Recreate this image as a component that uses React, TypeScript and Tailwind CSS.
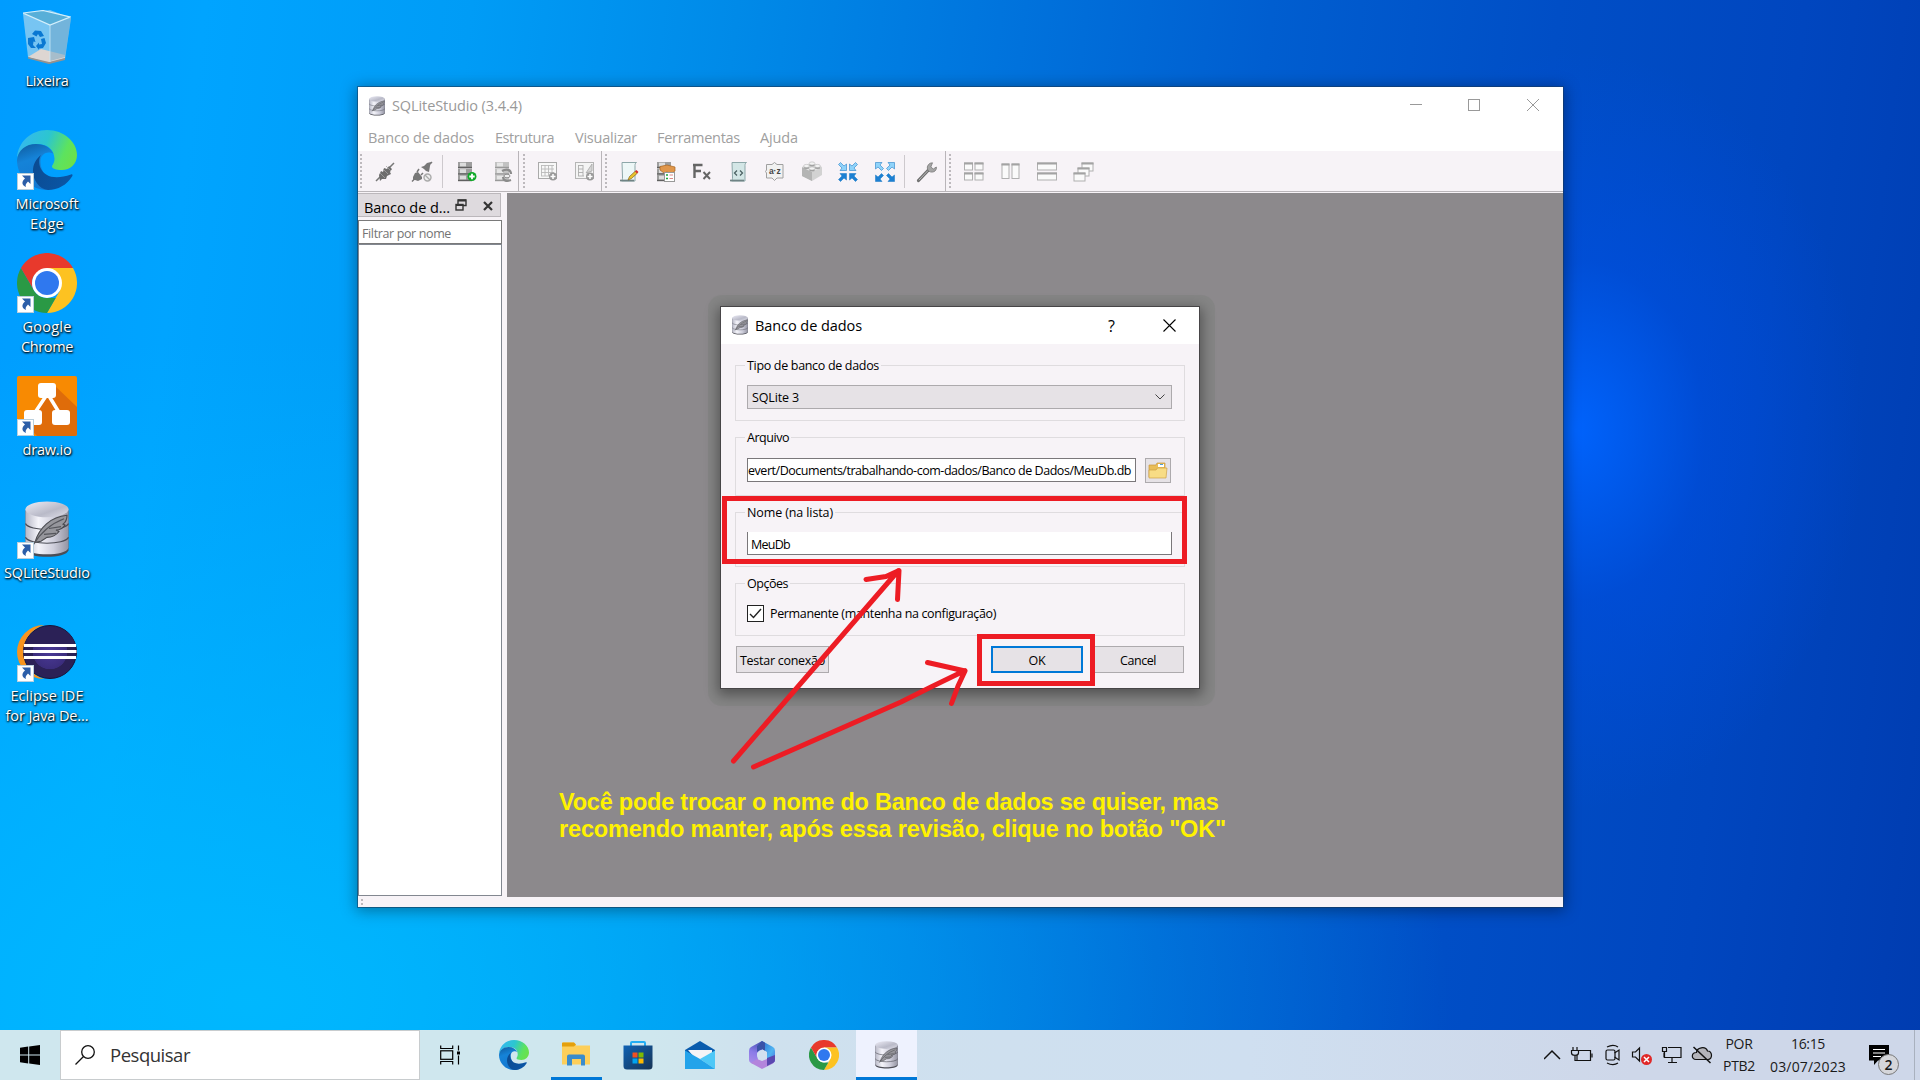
import React, { useLayoutEffect, useRef, useState } from "react";

/* Text run that adjusts its tracking so that it fills a given width. */
function Fit({ w, children, className = "" }: { w: number; children: string; className?: string }) {
  const ref = useRef<HTMLSpanElement>(null);
  const [gap, setGap] = useState(0);
  useLayoutEffect(() => {
    if (ref.current) setGap((w - ref.current.getBoundingClientRect().width) / children.length);
  }, []);
  return (
    <span ref={ref} className={`inline-block shrink-0 whitespace-pre ${className}`} style={{ letterSpacing: `${gap}px` }}>
      {children}
    </span>
  );
}

type S = { className?: string };

const EdgeIcon = ({ className = "" }: S) => (
  <svg viewBox="0 0 60 60" className={className}>
    <defs>
      <linearGradient id="eg1" x1="0" y1="0.3" x2="1" y2="0.6">
        <stop offset="0" stopColor="#35b8f1" />
        <stop offset="0.45" stopColor="#2cc6cf" />
        <stop offset="0.8" stopColor="#5de35e" />
        <stop offset="1" stopColor="#6be04c" />
      </linearGradient>
      <linearGradient id="eg2" x1="0" y1="0" x2="0.3" y2="1">
        <stop offset="0" stopColor="#0f5a9c" />
        <stop offset="0.4" stopColor="#1583d8" />
        <stop offset="1" stopColor="#1478d0" />
      </linearGradient>
      <linearGradient id="eg3" x1="0" y1="0" x2="1" y2="0.4">
        <stop offset="0" stopColor="#0b4a90" />
        <stop offset="1" stopColor="#0a55a4" />
      </linearGradient>
    </defs>
    <path d="M0 28C1 12 14 0 30 0c17 0 30 12 30 25 0 9-7 15-15 15-6 0-10-1.500-10-3.500 0-1.500 2.500-3 2.500-8C37 19 30 14 20 14 11 14 3 19 0 28Z" fill="url(#eg1)" />
    <path d="M0 30C1 20 9 14 19 14c9 0 15 4 17.500 10-4-3-13-2-13 8 0 10 8 19 16 20-3 5-6 8-9.500 8C13 60 0 46 0 30Z" fill="url(#eg2)" />
    <path d="M24 25c-2 3-2.500 8-.5 13 4 9 15 12 30.500 6.500 1.500-.5 2 .5 1.200 1.800C50 55 41 60 31 60 22 59 16 50 16 41c0-7 3-12 8-16Z" fill="url(#eg3)" />
  </svg>
);

const ChromeIcon = ({ className = "" }: S) => (
  <svg viewBox="0 0 60 60" className={className}>
    <path d="M30 30 4 15A30 30 0 0 1 56 15H30Z" fill="#e8392c" />
    <path d="M30 15h26a30 30 0 0 1-26 45L43 37.500Z" fill="#fdc221" />
    <path d="M4 15 17 37.500c3 5 8 7.500 13 7.500h8.700L30 60A30 30 0 0 1 4 15Z" fill="#2a9945" />
    <path d="M4 15h52H30a15 15 0 0 0-13 22.500Z" fill="#e8392c" />
    <circle cx="30" cy="30" r="15" fill="#fff" />
    <circle cx="30" cy="30" r="12" fill="#2f78ef" />
  </svg>
);

const DbIcon = ({ className = "" }: S) => (
  <svg viewBox="0 0 44 58" preserveAspectRatio="none" className={className}>
    <defs>
      <linearGradient id="db1" x1="0" x2="1">
        <stop offset="0" stopColor="#b7b8c6" />
        <stop offset="0.3" stopColor="#f4f4fa" />
        <stop offset="0.65" stopColor="#cfcfdc" />
        <stop offset="1" stopColor="#9394a2" />
      </linearGradient>
      <linearGradient id="db2" x1="0" x2="1" y1="0" y2="1">
        <stop offset="0" stopColor="#ececf6" />
        <stop offset="0.6" stopColor="#b9bac8" />
        <stop offset="1" stopColor="#dedee8" />
      </linearGradient>
    </defs>
    <path d="M.5 10v40c2 9 41 9 43 0V10Z" fill="#4c4d55" />
    <path d="M.5 8v39.500c2 9 41 9 43 0V8Z" fill="url(#db1)" />
    <ellipse cx="22" cy="8.500" rx="21.500" ry="8" fill="url(#db2)" />
    <path d="M.5 23c4 8 39 8 43 0M.5 37c4 8 39 8 43 0" fill="none" stroke="#4d4e57" strokeWidth="1.200" />
    <path d="M10 42C14 27 26 16 42 14.500c0 4-1 7-4 9l2 1c-2 3-6 5-9 5l3 1.500c-3 4-7 6-12 6l-6 4Z" fill="#96969c" stroke="#4a4b50" strokeWidth="1.100" />
    <path d="M8 45C15 33 26 23 39 18M19 34l12-1M24 28l12-2" fill="none" stroke="#55565c" strokeWidth="1.200" />
  </svg>
);

const RecycleBin = ({ className = "" }: S) => (
  <svg viewBox="0 0 48 54" className={className}>
    <path d="M0 4 27 0l21 8-6 41-15 4L5 47Z" fill="#9fd2ee" opacity="0.75" />
    <path d="M5 47l13-8 24 6v3l-16 5Z" fill="#ddd6d2" />
    <path d="M5 47l21 5 16-4v2l-16 4L5 48.500Z" fill="#95928f" />
    <path d="M27 15 48 8l-6 39-15 4Z" fill="#6fa3c4" opacity="0.5" />
    <path d="M0 3 20 .5 47 7 27 15Z" fill="#58afd8" stroke="#d4effb" strokeWidth="1.200" />
    <path d="M27 15v37" stroke="#c9e8f7" strokeWidth="0.800" />
    <g fill="#0a78d2">
      <path d="m9 24 3-3.500 6 .5 3 5-4 1-2-3-1.500 2.500Z" />
      <path d="m5 28 6-1 1.500 5-2-.5-.5 3.500 3 3h-5l-3-4Z" />
      <path d="m18 29 3.500-1 1.500 5-3 5-4 .5v1.500l-3-4 3-3.500v2l3-.5Z" />
    </g>
  </svg>
);

const DrawIo = ({ className = "" }: S) => (
  <svg viewBox="0 0 60 60" className={className}>
    <rect width="60" height="60" rx="2" fill="#f88a02" />
    <path d="M37 9 60 31v27a2 2 0 0 1-2 2H20L10 49l16-27Z" fill="#df6c0a" />
    <path d="M29 20 17 38M32 20l11 18" stroke="#fff" strokeWidth="3.500" />
    <rect x="21" y="7" width="18" height="15" rx="3" fill="#fff" />
    <rect x="7" y="34" width="18" height="15" rx="3" fill="#fff" />
    <rect x="35" y="34" width="18" height="15" rx="3" fill="#fff" />
  </svg>
);

const Eclipse = ({ className = "" }: S) => (
  <svg viewBox="0 0 60 54" className={className}>
    <defs>
      <radialGradient id="ec" cx="0.500" cy="0.500" r="0.500">
        <stop offset="0" stopColor="#4a3a96" />
        <stop offset="0.640" stopColor="#3b2d7c" />
        <stop offset="0.660" stopColor="#2b2156" />
        <stop offset="1" stopColor="#2b2156" />
      </radialGradient>
    </defs>
    <path d="M27 0a27 27 0 0 0 0 54C0 45 0 9 27 0Z" fill="#f7941e" />
    <circle cx="33" cy="27" r="26.500" fill="url(#ec)" stroke="#191338" />
    <path d="M8 19C14-4 52-4 58 19Z" fill="#2b2156" />
    <path d="M7 20.500h52M6.500 26.500h53M7 32.500h52" stroke="#fff" strokeWidth="3" />
  </svg>
);

const Shortcut = () => (
  <svg viewBox="0 0 17 17" className="absolute bottom-0 left-0 size-[17px]">
    <rect x="0.500" y="0.500" width="16" height="16" fill="#fff" stroke="#b9cfdd" />
    <path d="M5 2.500h8.500V11L11 8.500c-2 2-3 3.500-2 5.500-4-1.500-5-5-1-8.500Z" fill="#2c5ea8" />
  </svg>
);

function DesktopItem({ icon, lines, shortcut = true }: { icon: React.ReactNode; lines: [string, number][]; shortcut?: boolean }) {
  return (
    <div className="flex h-[123px] w-[94px] flex-col items-center">
      <div className="relative flex h-[60px] w-[60px] shrink-0 items-center justify-center">
        {icon}
        {shortcut && <Shortcut />}
      </div>
      <div className="mt-1 flex flex-col items-center text-[14.500px] leading-[20px] text-white [text-shadow:1px_1px_2px_#000,0_1px_2px_#000c]">
        {lines.map(([t, w]) => (
          <Fit key={t} w={w}>{t}</Fit>
        ))}
      </div>
    </div>
  );
}

/* ---------- toolbar glyphs, drawn on a 20 x 20 grid ---------- */
const Plug = () => (
  <g>
    <path d="M1 19 6 14M14 6l5-5" stroke="#777" strokeWidth="1.500" />
    <path d="m4 13 2-4 2 1 1-4 3 1 2-3 3 3-2 3 1 2-4 2-1 3-4 0-2 2Z" fill="#6d6d6d" />
    <path d="m5 11 5 5M8 7l5 5M11 4l5 5" stroke="#a4a4a4" strokeWidth="0.800" />
  </g>
);
const Unplug = () => (
  <g>
    <path d="m9 5 3-1 3-3 4-1-1 4-1 6-3-1-2-2Z" fill="#777" />
    <path d="m1 18 0-3 2-4 3-1 4 5 0 2-4 2-3-1Z" fill="#777" />
    <path d="M5 10 7 7M9 13l2-2M0 19.500l3-3M18 2l2-2" stroke="#777" strokeWidth="1.500" />
    <circle cx="15.500" cy="15.500" r="3.500" fill="#eee" stroke="#aaa" strokeWidth="1.400" />
    <path d="m13 13 5 5" stroke="#aaa" strokeWidth="1.300" />
  </g>
);
const Stack = ({ faded = false }: { faded?: boolean }) => (
  <g>
    {[0, 6.500, 13].map((y) => (
      <g key={y}>
        <rect x="1" y={y} width="14" height="6" fill={faded ? "#c2c2c2" : "#9d9d9d"} />
        <rect x="3" y={y + 0.700} width="6" height="3.800" fill={faded ? "#e6e6e6" : "#dcdcdc"} />
        <rect x="1" y={y + 4.800} width="14" height="1.400" fill={faded ? "#999" : "#606060"} />
      </g>
    ))}
  </g>
);
const DbAdd = () => (
  <g>
    <Stack />
    <circle cx="15" cy="14.500" r="4.500" fill="#10a928" />
    <path d="M15 11.800v5.400M12.300 14.500h5.400" stroke="#fff" strokeWidth="1.800" />
  </g>
);
const DbEdit = () => (
  <g>
    <Stack faded />
    <path d="M8 9c5-3 9-1 9 3M17 18c-5 2-8 0-8-3" stroke="#8b8b8b" strokeWidth="2.200" fill="none" />
    <ellipse cx="13" cy="14" rx="3" ry="1.800" fill="#eee" stroke="#909090" />
  </g>
);
const TableAdd = () => (
  <g>
    <rect x="0.500" y="0.500" width="18" height="16" fill="#f8f8f8" stroke="#aaa" />
    <path d="M3 3.500h13M3 7h13M3 10.500h13M3 14h10M3.500 3v11M7 3v11M10.500 3v11M14 3v9" stroke="#b9b9b9" strokeWidth="0.900" />
    <circle cx="15" cy="14.500" r="4" fill="#999" />
    <path d="M15 12v5M12.500 14.500h5" stroke="#fff" strokeWidth="1.500" />
  </g>
);
const ViewAdd = () => (
  <g>
    <rect x="0.500" y="0.500" width="18" height="16" fill="#f4f4f4" stroke="#b5b5b5" />
    <path d="M3 3.500h5M3 7h5M3 10.500h5M3 14h6M3.500 3v11M8 3v11M11 11l6-9v7Z" stroke="#adadad" fill="#d6d6d6" strokeWidth="0.900" />
    <circle cx="15" cy="14.500" r="4" fill="#999" />
    <path d="M15 12v5M12.500 14.500h5" stroke="#fff" strokeWidth="1.500" />
  </g>
);
const Script = ({ pencil = false }: { pencil?: boolean }) => (
  <g>
    <path d="M3 .5h14.500c-1.500 1-1.500 2-1.500 3V19H2.500c1-1 1-2 1-4Z" fill={pencil ? "#edf7f7" : "#d3e6e6"} stroke="#8da7a9" />
    <path d="M1 18.500h14" stroke="#6f8385" strokeWidth="1.700" />
    {pencil ? (
      <>
        <path d="m9 18 1.500-3.500 6-5.500 2 2-6 5.500Z" fill="#e9c22c" stroke="#85641a" strokeWidth="0.700" />
        <path d="m16 9.500 1.500-1.500 2 2-1.500 1.500Z" fill="#d82f2f" />
      </>
    ) : (
      <path d="M8 8.500 5.500 11 8 13.500M11 8.500 13.500 11 11 13.500" fill="none" stroke="#4d6264" strokeWidth="1.300" />
    )}
  </g>
);
const HandDb = () => (
  <g>
    <Stack />
    <path d="M4 4.500 11 3l8 2v4l-4 3-4-2-3 1-4-3Z" fill="#e0964a" stroke="#a8641f" strokeWidth="0.700" />
    <rect x="8.500" y="10.500" width="10" height="9" fill="#fff" stroke="#999" />
    <path d="M10 13h2M10 16.500h2" stroke="#18a838" strokeWidth="1.500" />
    <path d="M13.500 13h3.500M13.500 16.500h3.500" stroke="#d88" />
  </g>
);
const Fx = () => (
  <g fill="none" stroke="#656565">
    <path d="M2.500 16V2M1 3h9.500M2 9h7" strokeWidth="2.400" />
    <path d="m11.500 10 6.500 7M18 10l-6.500 7" strokeWidth="1.900" />
  </g>
);
const Az = () => (
  <g>
    <path d="M1.500 2.500h5.500l2.500-2 2.500 2h6v13.500h-6l-2.500 2.500-2.500-2.500H1.500v-5l-1-1.500 1-1.500Z" fill="#f1f1f1" stroke="#a0a0a0" />
    <text x="9.800" y="12.300" textAnchor="middle" fontSize="8.500" fontWeight="bold" fontFamily="Liberation Sans, sans-serif" fill="#444">a·z</text>
  </g>
);
const Brick = () => (
  <g>
    <path d="m0 5 10-4 10 4v8L10 19 0 14Z" fill="#d2d2d2" />
    <path d="m0 5 10 5v9L0 14Z" fill="#b4b4b4" />
    <path d="m0 5 10-4 10 4-10 5Z" fill="#e2e2e2" />
    {[[10, 1.500], [4.500, 4], [15.500, 4], [10, 6.500]].map(([x, y]) => (
      <g key={`${x}${y}`}>
        <ellipse cx={x} cy={y + 1.500} rx="2.900" ry="1.600" fill="#a0a0a0" />
        <ellipse cx={x} cy={y} rx="2.900" ry="1.600" fill="#f3f3f3" stroke="#aaa" strokeWidth="0.500" />
      </g>
    ))}
  </g>
);
const arrow = "M8.500 8.500V2L6 4 2.500.5l-2 2L4 6 2 8.500Z";
const arrowOut = "M.5.500V7L3 5l3.500 3.500 2-2L5 3 7 .5Z";
const Arrows = ({ d }: { d: string }) => (
  <g stroke="#2680c8" strokeWidth="0.600">
    <path d={d} fill="#8fd3fa" />
    <path d={d} fill="#8fd3fa" transform="matrix(-1 0 0 1 20 0)" />
    <path d={d} fill="#1c80d3" transform="matrix(1 0 0 -1 0 20)" />
    <path d={d} fill="#1c80d3" transform="matrix(-1 0 0 -1 20 20)" />
  </g>
);
const Wrench = () => (
  <g>
    <path d="M1.500 18.500 11 8.500" stroke="#6e6e6e" strokeWidth="3.200" strokeLinecap="round" />
    <path d="M1.800 18.200 11 8.500" stroke="#bbb" strokeWidth="1" />
    <path d="M15.500.8a5 5 0 0 0-5 6.500c1.200 3 5 3.600 7.500 1.700 1.200-1.200 1.600-2.700 1.300-4l-3 2-2.500-2Z" fill="#a5a5a5" stroke="#777" strokeWidth="0.800" />
  </g>
);
function Win({ x, y, w, h }: { x: number; y: number; w: number; h: number }) {
  return (
    <g>
      <rect x={x + 0.500} y={y + 0.500} width={w - 1} height={h - 1} fill="#fafafa" stroke="#b0b0b0" />
      <path d={`M${x} ${y + 1}h${w}`} stroke="#a3a3a3" strokeWidth="2" />
    </g>
  );
}

const Tool = ({ children }: { children: React.ReactNode }) => (
  <div className="flex h-full w-[36.500px] shrink-0 items-center justify-center pt-px">
    <svg viewBox="0 0 20 20" className="size-5 overflow-visible">{children}</svg>
  </div>
);
const Handle = () => <div className="h-[34px] w-0 shrink-0 border-l-2 border-dotted border-[#bdb9bd]" />;
const Sep = () => <div className="h-[33px] w-px shrink-0 bg-[#cdc9cd]" />;

function Toolbar() {
  return (
    <div className="flex h-[41px] items-center border-b border-[#b9b5b9] bg-[#f7f3f7]">
      <div className="flex h-full w-[161px] shrink-0 items-center border-r border-[#b9b5b9] pl-[2px]">
        <Handle />
        <div className="w-[5px] shrink-0" />
        <Tool><Plug /></Tool>
        <Tool><Unplug /></Tool>
        <div className="w-[2px] shrink-0" />
        <Sep />
        <div className="w-[6px] shrink-0" />
        <Tool><DbAdd /></Tool>
        <Tool><DbEdit /></Tool>
      </div>
      <div className="flex h-full w-[83px] shrink-0 items-center border-r border-[#b9b5b9] pl-[4px]">
        <Handle />
        <div className="w-[5px] shrink-0" />
        <Tool><TableAdd /></Tool>
        <Tool><ViewAdd /></Tool>
      </div>
      <div className="flex h-full w-[344px] shrink-0 items-center border-r border-[#b9b5b9] pl-[3px]">
        <Handle />
        <div className="flex h-full shrink-0 items-center pl-[4px]">
          <Tool><Script pencil /></Tool>
          <Tool><HandDb /></Tool>
          <Tool><Fx /></Tool>
          <Tool><Script /></Tool>
          <Tool><Az /></Tool>
          <Tool><Brick /></Tool>
          <Tool><Arrows d={arrow} /></Tool>
          <Tool><Arrows d={arrowOut} /></Tool>
        </div>
        <div className="w-px shrink-0" />
        <Sep />
        <div className="w-[4px] shrink-0" />
        <Tool><Wrench /></Tool>
      </div>
      <div className="flex h-full items-center pl-[3px]">
        <Handle />
        <div className="w-[5px]" />
        <Tool>
          <Win x={0} y={0.500} w={9} h={8} /><Win x={10.500} y={0.500} w={9} h={8} />
          <Win x={0} y={10.500} w={9} h={8} /><Win x={10.500} y={10.500} w={9} h={8} />
        </Tool>
        <Tool><Win x={0.500} y={1.500} w={8} h={15.500} /><Win x={10.500} y={1.500} w={8} h={15.500} /></Tool>
        <Tool><Win x={0} y={0.500} w={20} h={8} /><Win x={0} y={10.500} w={20} h={8} /></Tool>
        <Tool><Win x={7.500} y={0.500} w={12} h={9} /><Win x={3.500} y={5.500} w={12} h={9} /><Win x={-0.500} y={10.500} w={12} h={9} /></Tool>
      </div>
    </div>
  );
}

function MainWindow() {
  const menus: [string, number, string][] = [
    ["Banco de dados", 106, "mr-[21px]"],
    ["Estrutura", 59, "mr-[21px]"],
    ["Visualizar", 62, "mr-[20px]"],
    ["Ferramentas", 83, "mr-[20px]"],
    ["Ajuda", 38, ""],
  ];
  return (
    <section className="absolute left-[358px] top-[87px] flex h-[820px] w-[1205px] flex-col bg-[#f7f3f7] shadow-[0_2px_14px_2px_rgba(0,0,0,0.35),0_0_0_1px_rgba(30,70,110,0.55)]">
      <header className="flex h-[38px] shrink-0 items-center bg-white pl-[11px] text-[14.500px] text-[#999]">
        <DbIcon className="mb-px h-[20px] w-[16px]" />
        <Fit w={130} className="ml-[7px]">SQLiteStudio (3.4.4)</Fit>
        <svg viewBox="0 0 130 12" className="mb-[2px] ml-auto mr-[24px] h-3 w-[130px]" fill="none" stroke="#999">
          <path d="M1 5.500h12" />
          <rect x="59.500" y="0.500" width="11" height="11" />
          <path d="m118 0 12 12M130 0l-12 12" />
        </svg>
      </header>
      <nav className="flex h-[26px] shrink-0 items-center bg-white pl-[10px] text-[14.500px] text-[#a0a0a0]">
        {menus.map(([t, w, m]) => (
          <Fit key={t} w={w} className={m}>{t}</Fit>
        ))}
      </nav>
      <Toolbar />
      <div className="flex h-[705px] w-full shrink-0 pt-px">
        <aside className="flex w-[144px] flex-col">
          <div className="flex h-6 w-[143px] items-center border border-l-0 border-[#bbb7bb] bg-[#dedade] pl-[6px] pt-[5px] text-[14.500px] text-black">
            <Fit w={86}>Banco de d...</Fit>
            <svg viewBox="0 0 12 12" className="mb-[6px] ml-[5px] size-3" fill="none" stroke="#333">
              <path d="M3 5V1h8v5.500H8" strokeWidth="1.400" />
              <path d="M3 1.500h8M1 6h7" strokeWidth="2" />
              <rect x="1" y="5.500" width="7" height="5.500" strokeWidth="1.400" />
            </svg>
            <svg viewBox="0 0 10 10" className="mb-1 ml-4 size-[10px]" stroke="#333" strokeWidth="2.200">
              <path d="m1 1 8 8M9 1 1 9" />
            </svg>
          </div>
          <div className="mt-[3px] flex h-6 items-center border border-[#7a7a7a] bg-white pl-[3px] pt-[4px] text-[12.500px] text-[#747474]">
            <Fit w={89}>Filtrar por nome</Fit>
          </div>
          <div className="h-[652px] border border-[#828790] bg-white" />
        </aside>
        <main className="ml-[5px] flex-1 bg-[#8c898c]" />
      </div>
      <footer className="flex h-[10px] items-center pl-[3px]">
        <div className="h-[6px] border-l-2 border-dotted border-[#bdb9bd]" />
      </footer>
    </section>
  );
}

function Group({ title, w, className, children }: { title: string; w: number; className: string; children: React.ReactNode }) {
  return (
    <div className={`relative flex w-[450px] border border-[#dfdcdf] ${className}`}>
      <div className="absolute -top-[10px] left-[9px] flex h-5 items-center bg-[#f7f3f7] px-[2px]">
        <Fit w={w}>{title}</Fit>
      </div>
      {children}
    </div>
  );
}

function Dialog() {
  return (
    <>
      <div className="absolute left-[708px] top-[295px] h-[411px] w-[507px] rounded-[14px] bg-[#767d76]/30" />
      <section className="absolute left-[720px] top-[306px] flex h-[383px] w-[480px] flex-col border border-[#474547] bg-[#f7f3f7] text-[12.500px] leading-[18px] text-black shadow-[0_4px_12px_2px_rgba(0,0,0,0.38)]">
        <header className="flex h-[37px] shrink-0 items-center bg-white pl-[11px] text-[14.500px]">
          <DbIcon className="mb-[2px] h-[20px] w-[16px]" />
          <Fit w={107} className="ml-[7px]">Banco de dados</Fit>
          <span className="ml-auto w-[9px] text-center text-[16px]">?</span>
          <svg viewBox="0 0 13 13" className="mb-px ml-[47px] mr-[23px] size-[13px]" stroke="#000" strokeWidth="1.100">
            <path d="m.5.500 12 12M12.500.500l-12 12" />
          </svg>
        </header>
        <div className="flex flex-col pl-[14px] pt-[21px]">
          <Group title="Tipo de banco de dados" w={132} className="h-[56px] pl-[11px] pt-[19px]">
            <div className="flex h-6 w-[425px] items-center border border-[#adaaad] bg-[#e6e2e6] pl-1">
              <Fit w={47} className="mt-px">SQLite 3</Fit>
              <svg viewBox="0 0 10 6" className="ml-auto mr-[6px] h-[6px] w-[10px]" fill="none" stroke="#444">
                <path d="m.5.500 4.500 4.500L9.500.5" />
              </svg>
            </div>
          </Group>
          <Group title="Arquivo" w={42} className="mt-4 h-[59px] pl-[11px] pt-5">
            <div className="flex h-6 w-[389px] items-center justify-end border border-[#7a777a] bg-white pr-1 pt-[2px]">
              <Fit w={383}>evert/Documents/trabalhando-com-dados/Banco de Dados/MeuDb.db</Fit>
            </div>
            <div className="ml-[9px] flex h-[25px] w-[26px] items-center justify-center border border-[#adaaad] bg-[#e6e2e6]">
              <svg viewBox="0 0 20 17" className="h-[17px] w-5">
                <path d="M1 3h7l1-2h8v14H1Z" fill="#e9bd57" stroke="#c9973c" strokeWidth="0.700" />
                <rect x="10" y="2" width="6" height="3" fill="#fff" />
                <path d="M12 2.500h3" stroke="#4f9fd8" />
                <path d="M1 16V8h7l1.500-2H19l-1 10Z" fill="#f8dc85" stroke="#cfa046" strokeWidth="0.700" />
              </svg>
            </div>
          </Group>
          <Group title="Nome (na lista)" w={86} className="mt-4 h-[55px] pl-[11px] pt-[19px]">
            <div className="flex h-[23px] w-[425px] items-center border border-t-0 border-[#7a777a] bg-white pl-[3px] pt-[3px]">
              <Fit w={39}>MeuDb</Fit>
            </div>
          </Group>
          <Group title="Opções" w={41} className="mt-4 h-[53px] items-start pl-[11px] pt-[21px]">
            <div className="flex size-[17px] items-center justify-center border border-[#222] bg-white">
              <svg viewBox="0 0 13 11" className="h-[11px] w-[13px]" fill="none" stroke="#222" strokeWidth="1.400">
                <path d="m1 6 3.500 3.500L12 1" />
              </svg>
            </div>
            <Fit w={226} className="ml-[6px]">Permanente (mantenha na configuração)</Fit>
          </Group>
          <div className="mt-[10px] flex pl-px">
            <div className="flex h-[27px] w-[93px] items-center justify-center border border-[#adaaad] bg-[#e6e2e6] pt-[3px]">
              <Fit w={85}>Testar conexão</Fit>
            </div>
            <div className="ml-[162px] flex h-[27px] w-[92px] items-center justify-center border-2 border-[#0078d7] bg-[#e6e2e6] pt-[3px]">
              <Fit w={17}>OK</Fit>
            </div>
            <div className="ml-[9px] flex h-[27px] w-[92px] items-center justify-center border border-[#adaaad] bg-[#e6e2e6] pt-[3px]">
              <Fit w={36}>Cancel</Fit>
            </div>
          </div>
        </div>
      </section>
    </>
  );
}

function Annotations() {
  return (
    <>
      <div className="absolute left-[722px] top-[496px] h-[68px] w-[465px] border-[5px] border-[#ed1c24]" />
      <div className="absolute left-[977px] top-[634px] h-[52px] w-[118px] border-[5px] border-[#ed1c24]" />
      <svg viewBox="720 560 260 220" className="absolute left-[720px] top-[560px] h-[220px] w-[260px]" fill="none" stroke="#ed1c24" strokeWidth="5" strokeLinecap="round" strokeLinejoin="round">
        <path d="M733.500 761 898 571M866 579.500l20-3 13-6-1.500 29" />
        <path d="M753.500 767 901 702l30-15 34-16.500M927.500 662.500l20 4.500 17.500 4-7 15-6.500 17.500" />
      </svg>
      <div className="absolute left-[559px] top-[789px] flex flex-col font-['Liberation_Sans',sans-serif] text-[23.500px] font-bold leading-[27px] text-[#fff200]">
        <Fit w={664}>Você pode trocar o nome do Banco de dados se quiser, mas</Fit>
        <Fit w={667}>recomendo manter, após essa revisão, clique no botão "OK"</Fit>
      </div>
    </>
  );
}

function Taskbar() {
  return (
    <footer className="absolute bottom-0 left-0 flex h-[50px] w-full bg-[linear-gradient(90deg,#cfe7ee_0%,#cfe7ee_34%,#cfe1ee_40%,#cfdff0_65%,#ced7e9_85%,#ced7e9_100%)] text-[#1a1a1a]">
      <div className="flex w-[60px] items-center justify-center">
        <svg viewBox="0 0 20 20" className="size-5" fill="#000">
          <path d="M0 2.700 8.200 1.600v7.900H0ZM9.200 1.400 20 0v9.500H9.200ZM0 10.500h8.200v7.900L0 17.300ZM9.200 10.500H20V20L9.200 18.500Z" />
        </svg>
      </div>
      <div className="flex w-[360px] items-center border border-[#c8ccce] bg-white pl-[14px] text-[18.500px] text-[#333]">
        <svg viewBox="0 0 20 20" className="size-5" fill="none" stroke="#111" strokeWidth="1.300">
          <circle cx="13" cy="7" r="6.300" />
          <path d="M8.500 11.500.5 19.500" />
        </svg>
        <Fit w={80} className="ml-[15px]">Pesquisar</Fit>
      </div>
      <div className="flex w-[60px] items-center justify-center">
        <svg viewBox="0 0 20 20" className="size-5" fill="none" stroke="#000" strokeWidth="1.200">
          <path d="M.7.500v3h12v-3M.7 19.500v-3h12v3M18.500.5v5M18.500 10.500v9" />
          <rect x="0.700" y="5.800" width="12" height="8.500" />
          <rect x="17" y="6.500" width="3" height="3" fill="#000" stroke="none" />
        </svg>
      </div>
      <div className="flex w-[68px] items-center justify-center"><EdgeIcon className="size-[30px]" /></div>
      <div className="flex w-[56px] flex-col items-center">
        <div className="flex flex-1 items-center">
          <svg viewBox="0 0 28 24" className="mt-px h-6 w-7">
            <path d="M0 1.500Q0 .5 1 .5h11l2 3H28v19H0Z" fill="#fdcf5a" />
            <path d="M0 1.500Q0 .5 1 .5h11l2 2-2 2H0Z" fill="#e4a00c" />
            <path d="M5 23.500v-9q0-2 2-2h14q2 0 2 2v9h-4v-6.500h-9v6.500Z" fill="#3a8ccc" />
          </svg>
        </div>
        <div className="h-[3px] w-[51px] bg-[#0078d7]" />
      </div>
      <div className="flex w-[68px] items-center justify-center">
        <svg viewBox="0 0 30 30" className="size-[30px]">
          <defs>
            <linearGradient id="st" x1="0" y1="0" x2="1" y2="1">
              <stop offset="0" stopColor="#0f62b4" />
              <stop offset="1" stopColor="#183454" />
            </linearGradient>
          </defs>
          <path d="M8 7V3q0-1 1-1h12q1 0 1 1v4" fill="none" stroke="#22aef4" strokeWidth="2" />
          <path d="M.5 5.500h29V26q0 3.500-3.500 3.500H4Q.5 29.500.5 26Z" fill="url(#st)" />
          <path d="M9.500 12.500h5v5h-5Z" fill="#f25022" />
          <path d="M15.500 12.500h5v5h-5Z" fill="#7fba00" />
          <path d="M9.500 18.500h5v5h-5Z" fill="#00a4ef" />
          <path d="M15.500 18.500h5v5h-5Z" fill="#ffb900" />
        </svg>
      </div>
      <div className="flex w-[56px] items-center justify-center">
        <svg viewBox="0 0 30 28" className="h-7 w-[30px]">
          <path d="M0 9 15 0l15 9v6H0Z" fill="#0a5cad" />
          <path d="M3 9h24v8l-12 6Z" fill="#f5f4f6" />
          <path d="M30 9.500V28L15 18Z" fill="#4ec8f7" />
          <path d="M0 9.500 15 18l15 10H0Z" fill="#23a3ea" />
        </svg>
      </div>
      <div className="flex w-[68px] items-center justify-center">
        <svg viewBox="0 0 26 28" className="h-7 w-[26px]">
          <defs>
            <linearGradient id="of1" x1="0.500" y1="0" x2="0.300" y2="1">
              <stop offset="0" stopColor="#4b54b8" />
              <stop offset="0.500" stopColor="#8b7be8" />
              <stop offset="1" stopColor="#a98be8" />
            </linearGradient>
            <linearGradient id="of2" x1="0" y1="0" x2="1" y2="1">
              <stop offset="0" stopColor="#2f6fd0" />
              <stop offset="0.600" stopColor="#4fb4f2" />
              <stop offset="1" stopColor="#4b6fdc" />
            </linearGradient>
          </defs>
          <path d="M13 0 2 6Q0 7 0 10v9q0 2 2 3l3 1 4-4-1-7 5-3Z" fill="url(#of1)" />
          <path d="m13 0 11 6q2 1 2 4v9q0 2-2 3l-6-4v-7l-5-3Z" fill="url(#of2)" />
          <path d="m13 0 3 1.700V10l-3-2-5 3V5Z" fill="#3a52a8" />
          <path d="m2 22 6-4 5 2 5-2 8 2-2 2.500L13 28Z" fill="#b384dc" />
          <path d="m18 17 8-3v5q0 2-2 3l-6 3Z" fill="#5a48b0" />
          <circle cx="13" cy="14" r="5" fill="#d2e1ef" />
        </svg>
      </div>
      <div className="flex w-[56px] items-center justify-center"><ChromeIcon className="size-[30px]" /></div>
      <div className="ml-1 flex w-[61px] flex-col items-center bg-[#eef2fe]">
        <div className="flex flex-1 items-center pt-[2px]"><DbIcon className="h-[28px] w-[23px]" /></div>
        <div className="h-[3px] w-full bg-[#0078d7]" />
      </div>
      <div className="ml-auto flex items-center">
        <svg viewBox="0 0 170 24" className="h-6 w-[170px]" fill="none" stroke="#111" strokeWidth="1.200">
          <path d="m0 16 8-8 8 8" strokeWidth="1.500" />
          <path d="M35 7.500h11.500v10H33M48 10.500v4M33 17.500v-5M29 4v3M33 4v3M27.500 7.500h7v2.500c0 3-7 3-7 0ZM31 12v5.500h2" />
          <path d="M63 4c4-2 8-2 11 0M63 20c4 2 8 2 11 0M70.500 10l4.500-3v10l-4.500-3" />
          <rect x="62" y="7" width="9" height="10" rx="1.500" />
          <path d="M88.500 9h3l4-4v13l-4-4h-3Z" />
          <circle cx="102.500" cy="16.500" r="5.500" fill="#e02828" stroke="none" />
          <path d="m100 14 5 5M105 14l-5 5" stroke="#fff" strokeWidth="1.500" />
          <path d="M124 4.500h13v10h-17M120 14.500v-5M128 15v4M124 19.500h9M118.500 4.500h4v4h-4ZM120.500 8.500v6" />
          <path d="M152 16.500c-5 0-5-7 .5-7 0-5 9-7 11-1.500 5-.5 5.500 8.500.5 8.500Z" fill="#b4b4ba" />
          <path d="m149.500 4 17 16" strokeWidth="1.500" />
        </svg>
        <div className="ml-[8px] flex w-[34px] flex-col items-center text-[14px] leading-[22px]">
          <Fit w={27}>POR</Fit>
          <Fit w={32}>PTB2</Fit>
        </div>
        <div className="ml-[13px] flex w-[78px] flex-col items-center text-[14px] leading-[23px]">
          <Fit w={34}>16:15</Fit>
          <Fit w={76}>03/07/2023</Fit>
        </div>
        <div className="relative ml-[22px] h-[50px] w-[45px]">
          <svg viewBox="0 0 20 20" className="absolute left-0 top-[15px] size-5">
            <path d="M0 0h20v15.500H9L5 20v-4.500H0Z" fill="#000" />
            <path d="M4 4.500h12M4 8h12M4 11.500h8" stroke="#fff" strokeWidth="1.200" />
          </svg>
          <div className="absolute left-[9px] top-[24px] flex size-[21px] items-center justify-center rounded-full border border-[#777] bg-[#d5d6da] text-[14px] font-semibold leading-none">2</div>
        </div>
        <div className="mr-[5px] h-[50px] w-px bg-[#a9b1be]" />
      </div>
    </footer>
  );
}

export default function App() {
  return (
    <div className="relative h-[1080px] w-[1920px] overflow-hidden bg-[#0078dc] font-['Open_Sans','Noto_Sans',sans-serif]">
      <div className="absolute inset-0 bg-[radial-gradient(ellipse_290px_380px_at_1575px_430px,rgba(0,100,255,0.95),rgba(0,80,235,0.45)_45%,transparent),linear-gradient(97deg,#009cff_0%,#00a4ff_10%,#009cf6_23%,#008ae8_36%,#0072dc_50%,#005ed0_62%,#004ec6_76%,#0046bf_88%,#003cb0_100%)]" />
      <div className="absolute inset-0 bg-[radial-gradient(ellipse_1200px_660px_at_250px_1000px,rgba(0,186,255,0.9),transparent)]" />
      <div className="absolute left-0 top-[7px] flex flex-col">
        <DesktopItem shortcut={false} icon={<RecycleBin className="h-[54px] w-[48px]" />} lines={[["Lixeira", 43]]} />
        <DesktopItem icon={<EdgeIcon className="size-[60px]" />} lines={[["Microsoft", 63], ["Edge", 34]]} />
        <DesktopItem icon={<ChromeIcon className="size-[60px]" />} lines={[["Google", 49], ["Chrome", 52]]} />
        <DesktopItem icon={<DrawIo className="size-[60px]" />} lines={[["draw.io", 49]]} />
        <DesktopItem icon={<DbIcon className="h-[57px] w-[44px]" />} lines={[["SQLiteStudio", 86]]} />
        <DesktopItem icon={<Eclipse className="h-[54px] w-[60px]" />} lines={[["Eclipse IDE", 73], ["for Java De...", 83]]} />
      </div>
      <MainWindow />
      <Dialog />
      <Annotations />
      <Taskbar />
    </div>
  );
}
